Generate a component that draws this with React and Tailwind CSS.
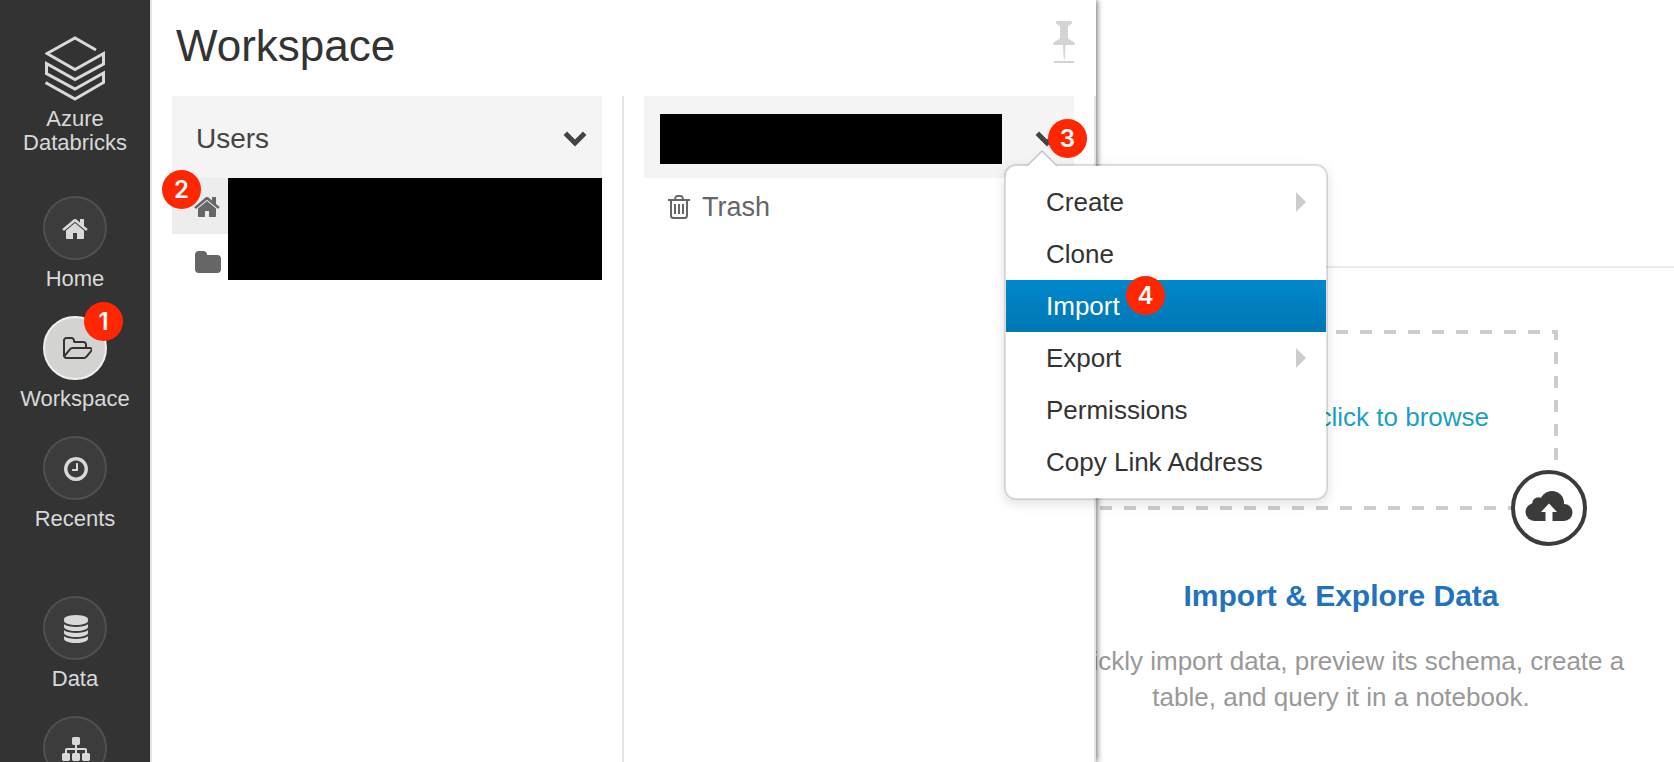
const ICONS = {
  home: "M1408 992v480q0 26-19 45t-45 19h-384v-384h-256v384h-384q-26 0-45-19t-19-45v-480q0-1 .5-3t.5-3l575-474 575 474q1 2 1 6zm223-69l-62 74q-8 9-21 11h-3q-13 0-21-7l-692-577-692 577q-12 8-24 7-13-2-21-11l-62-74q-8-10-7-23.5t11-21.5l719-599q32-26 76-26t76 26l244 204v-195q0-14 9-23t23-9h192q14 0 23 9t9 23v408l219 182q10 8 11 21.5t-7 23.5z",
  folder: "M1728 608v704q0 92-66 158t-158 66h-1216q-92 0-158-66t-66-158v-960q0-92 66-158t158-66h320q92 0 158 66t66 158v32h672q92 0 158 66t66 158z",
  open: "M1845 931q0-35-53-35h-1088q-40 0-85.5 21.5t-71.5 52.5l-294 363q-18 24-18 40 0 35 53 35h1088q40 0 86-22t71-53l294-363q18-22 18-39zm-1141-163h768v-160q0-40-28-68t-68-28h-576q-40 0-68-28t-28-68v-64q0-40-28-68t-68-28h-320q-40 0-68 28t-28 68v853l256-315q44-53 116-87.5t140-34.5zm1269 163q0 62-46 120l-295 363q-43 53-116 87.5t-140 34.5h-1088q-92 0-158-66t-66-158v-960q0-92 66-158t158-66h320q92 0 158 66t66 158v32h544q92 0 158 66t66 158v160h192q54 0 99 24.5t67 70.5q15 32 15 68z",
  clock: "M1024 544v448q0 14-9 23t-23 9h-320q-14 0-23-9t-9-23v-64q0-14 9-23t23-9h224v-352q0-14 9-23t23-9h64q14 0 23 9t9 23zm416 352q0-148-73-273t-198-198-273-73-273 73-198 198-73 273 73 273 198 198 273 73 273-73 198-198 73-273zm224 0q0 209-103 385.5t-279.5 279.5-385.5 103-385.5-103-279.5-279.5-103-385.5 103-385.5 279.5-279.5 385.5-103 385.5 103 279.5 279.5 103 385.5z",
  data: "M896 768q237 0 443-43t325-127v170q0 69-103 128t-280 93.5-385 34.5-385-34.5-280-93.5-103-128v-170q119 84 325 127t443 43zm0 768q237 0 443-43t325-127v170q0 69-103 128t-280 93.5-385 34.5-385-34.5-280-93.5-103-128v-170q119 84 325 127t443 43zm0-384q237 0 443-43t325-127v170q0 69-103 128t-280 93.5-385 34.5-385-34.5-280-93.5-103-128v-170q119 84 325 127t443 43zm0-1152q208 0 385 34.5t280 93.5 103 128v128q0 69-103 128t-280 93.5-385 34.5-385-34.5-280-93.5-103-128v-128q0-69 103-128t280-93.5 385-34.5z",
  sitemap: "M1792 1248v320q0 40-28 68t-68 28h-320q-40 0-68-28t-28-68v-320q0-40 28-68t68-28h96v-192h-512v192h96q40 0 68 28t28 68v320q0 40-28 68t-68 28h-320q-40 0-68-28t-28-68v-320q0-40 28-68t68-28h96v-192h-512v192h96q40 0 68 28t28 68v320q0 40-28 68t-68 28h-320q-40 0-68-28t-28-68v-320q0-40 28-68t68-28h96v-192q0-52 38-90t90-38h512v-192h-96q-40 0-68-28t-28-68v-320q0-40 28-68t68-28h320q40 0 68 28t28 68v320q0 40-28 68t-68 28h-96v192h512q52 0 90 38t38 90v192h96q40 0 68 28t28 68z",
};

function Icon({ name, className = "size-7", box = "0 0 1792 1792" }) {
  return (
    <svg viewBox={box} className={`shrink-0 ${className}`} fill="currentColor" aria-hidden="true">
      <path d={ICONS[name]} />
    </svg>
  );
}

function Chevron() {
  return (
    <svg viewBox="0 0 24 16" className="h-4 w-6 shrink-0" fill="none" stroke="currentColor" strokeWidth="5" aria-hidden="true">
      <path d="M2.300 2.300L12 12 21.700 2.300" />
    </svg>
  );
}

function Badge({ n, className }) {
  return (
    <span
      className={`absolute z-30 flex size-[39px] items-center justify-center rounded-full bg-[#ff2600] font-[Inter,sans-serif] text-2xl font-semibold text-white ${className}`}
    >
      {n}
    </span>
  );
}

function NavItem({ icon, label, active, badge, box, iconClass, iconOnly }) {
  return (
    <a href="#" aria-label={label} className="relative flex w-full flex-col items-center gap-[7px]">
      <span
        className={`flex size-16 items-center justify-center rounded-full border-2 pt-0.5 pl-0.5 ${
          active ? "border-[#f0f0ee] bg-[#d3d3d1] text-[#333]" : "border-[#505050] bg-[#3c3c3c] text-[#d9d9d9]"
        }`}
      >
        <Icon name={icon} box={box} className={iconClass} />
      </span>
      {!iconOnly && <span>{label}</span>}
      {badge && <Badge n={badge} className="-top-3.5 left-[84px]" />}
    </a>
  );
}

function Sidebar() {
  return (
    <nav className="relative z-20 flex w-[152px] shrink-0 flex-col items-center overflow-hidden border-r-2 border-[#e5e5e5] bg-[#333] pt-9 text-[22px] leading-6 text-[#d9d9d9]">
      <a href="#" className="flex flex-col items-center gap-[5px] text-center">
        <svg viewBox="0 0 60 66" className="h-[66px] w-[60px]" fill="none" stroke="currentColor" strokeWidth="3" aria-hidden="true">
          <path d="M51 14L30 2 2 17.500 30 33.500 58.500 17.500V28L30 43.500 1.500 27.500V37.500L30 53 58.500 37V46.500L30 63 .500 46.500" />
        </svg>
        <span>
          Azure
          <br />
          Databricks
        </span>
      </a>
      <div className="mt-[41px] flex w-full flex-col gap-[25px]">
        <NavItem icon="home" label="Home" />
        <NavItem icon="open" label="Workspace" active badge="1" box="0 0 1920 1792" iconClass="ml-0.5 h-7 w-[30px]" />
        <NavItem icon="clock" label="Recents" />
      </div>
      <div className="mt-[65px] flex w-full flex-col gap-[25px]">
        <NavItem icon="data" label="Data" />
        <NavItem icon="sitemap" label="Clusters" iconOnly />
      </div>
    </nav>
  );
}

const MENU = [
  { label: "Create", sub: true },
  { label: "Clone" },
  { label: "Import", active: true },
  { label: "Export", sub: true },
  { label: "Permissions" },
  { label: "Copy Link Address" },
];

function ContextMenu() {
  return (
    <div className="absolute top-[68px] left-[360px] z-20 w-[324px] rounded-xl border-2 border-black/12 bg-white bg-clip-padding py-2.5 text-[26px] leading-[52px] text-[#333] shadow-[0_4px_12px_rgba(0,0,0,0.12)]">
      <svg viewBox="0 0 32 18" className="absolute -top-4 left-5 h-[18px] w-8" aria-hidden="true">
        <path d="M1 16L16 1 31 16V18H1Z" fill="#fff" />
        <path d="M1 16L16 1 31 16" fill="none" stroke="#c4c4c4" strokeWidth="1.500" />
      </svg>
      {MENU.map((item) => (
        <button
          key={item.label}
          type="button"
          className={`relative flex w-full items-center justify-between pr-5 pl-10 text-left ${
            item.active ? "bg-linear-to-b from-[#0088cc] to-[#0077b3] text-white" : ""
          }`}
        >
          {item.label}
          {item.sub && (
            <svg viewBox="0 0 10 20" className="h-5 w-2.5" fill="#ccc" aria-hidden="true">
              <path d="M0 0L10 10 0 20Z" />
            </svg>
          )}
          {item.active && <Badge n="4" className="-top-1 left-[120px]" />}
        </button>
      ))}
    </div>
  );
}

function WorkspacePanel() {
  return (
    <section className="absolute inset-y-0 left-0 z-10 flex w-[944px] flex-col bg-white shadow-[1px_0_6px_rgba(0,0,0,0.6)]">
      <header className="flex h-24 items-start justify-between pt-5 pr-5 pl-6">
        <h1 className="text-[44px] leading-[52px] text-[#333]">Workspace</h1>
        <button type="button" aria-label="Pin panel" className="text-[#d4d4d4]">
          <svg viewBox="0 0 24 44" className="h-11 w-6" fill="currentColor" aria-hidden="true">
            <path d="M4.500 1H18.500Q20 1 20 2.500T18.500 4.500Q16 5.500 16 7V17.500Q16 19.500 19 20.500 23 22 23 25H1Q1 22 5 20.500 8 19.500 8 17.500V7Q8 5.500 5.500 4.500 4 4 4 2.500T4.500 1ZM11 25H13.500L12.800 39H11.700ZM2 41H22V43H2Z" />
          </svg>
        </button>
      </header>
      <div className="flex flex-1 text-[27px] text-[#666]">
        <div className="relative flex-1 border-r-2 border-[#e5e5e5] px-5">
          <button type="button" className="flex h-[82px] w-full items-center justify-between bg-[#f4f4f4] pt-1 pr-[15px] pl-6 text-[28px] leading-10 text-[#444]">
            Users
            <Chevron />
          </button>
          <div className="relative">
            <div className="flex h-14 items-center bg-[#ededed] pt-0.5 pl-[22px]">
              <Icon name="home" />
            </div>
            <div className="flex h-14 items-center pt-0.5 pl-[22px]">
              <Icon name="folder" />
            </div>
            <div className="absolute top-0 right-0 left-14 h-[102px] bg-black" />
            <Badge n="2" className="-top-2 -left-2.5" />
          </div>
        </div>
        <div className="relative flex-1 border-r-2 border-[#e5e5e5] px-5">
          <div className="relative">
            <button type="button" aria-label="Folder actions" className="flex h-[82px] w-full items-center justify-between bg-[#f4f4f4] pt-1 pr-[15px] pl-4 text-[#444]">
              <span className="h-[50px] w-[342px] bg-black" />
              <Chevron />
            </button>
            <Badge n="3" className="top-[23px] left-[404px]" />
            <ContextMenu />
          </div>
          <a href="#" className="flex h-14 items-center gap-3 pt-0.5 pl-6">
            <svg viewBox="0 0 22 26" className="h-[26px] w-[22px]" fill="none" stroke="currentColor" strokeWidth="2" aria-hidden="true">
              <path d="M0 6H22M3 6V21.500Q3 24 5.500 24H16.500Q19 24 19 21.500V6M6.500 6L7.500 3.500Q8 2 9.500 2H12.500Q14 2 14.500 3.500L15.500 6M7 10V20M11 10V20M15 10V20" />
            </svg>
            Trash
          </a>
        </div>
      </div>
    </section>
  );
}

function ImportCard() {
  return (
    <section className="ml-auto flex w-[666px] flex-col pt-[62px] text-center">
      <button type="button" className="relative ml-16 flex h-[180px] w-[486px] items-center justify-end pr-[69px] pb-1.5 text-[26px] text-[#1b9fc4]">
        <svg viewBox="0 0 486 180" className="absolute inset-0 size-full" fill="none" stroke="#ccc" strokeWidth="4" strokeDasharray="12 12" aria-hidden="true">
          <path d="M0 2H486" />
          <path d="M484 0V180" strokeDashoffset="2" />
          <path d="M0 178H486" strokeDashoffset="-4" />
          <path d="M2 0V180" />
        </svg>
        Drop files or click to browse
        <span className="absolute -right-[29px] -bottom-9 flex size-[76px] items-center justify-center rounded-full border-4 border-[#3b3b3a] bg-white pb-1">
          <svg viewBox="0 0 48 30" className="h-[30px] w-12" fill="#3b3b3a" aria-hidden="true">
            <circle cx="9.500" cy="21" r="9" />
            <circle cx="13.500" cy="12.500" r="6.300" />
            <circle cx="27" cy="12" r="12" />
            <circle cx="39" cy="21.500" r="8.500" />
            <path d="M9.500 14H39V30H9.500Z" />
            <path d="M24 12.500L32 21H27.500V30H20.500V21H16Z" fill="#fff" />
          </svg>
        </span>
      </button>
      <h2 className="mt-16 text-[30px] leading-[44px] font-bold text-[#2272bd]">Import &amp; Explore Data</h2>
      <p className="mx-auto mt-[25px] w-[600px] text-[26px] leading-9 text-[#999]">
        Quickly import data, preview its schema, create a table, and query it in a notebook.
      </p>
    </section>
  );
}

export default function App() {
  return (
    <div className="flex h-screen overflow-hidden bg-white font-['Liberation_Sans',Arial,sans-serif]">
      <Sidebar />
      <main className="relative flex-1">
        <div className="h-[268px] border-b-2 border-[#ebebeb]" />
        <ImportCard />
        <WorkspacePanel />
      </main>
    </div>
  );
}
